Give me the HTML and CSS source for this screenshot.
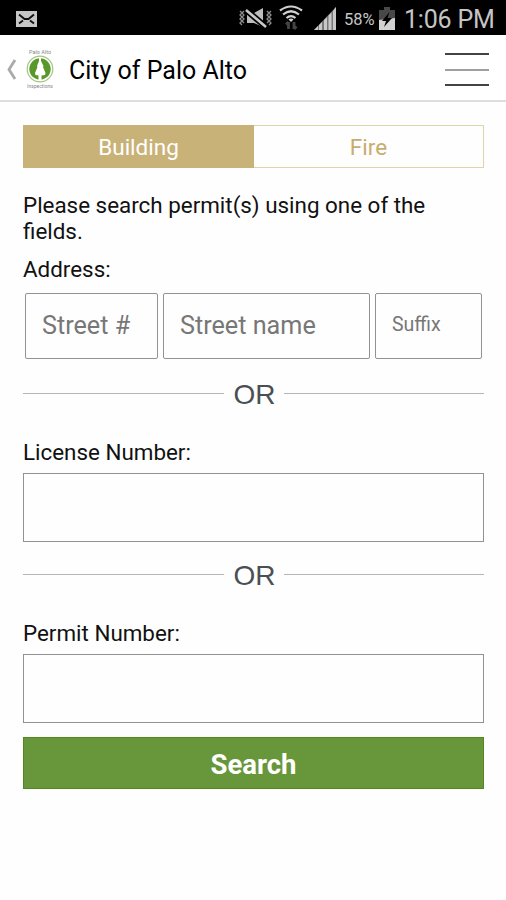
FILE: index.html
```html
<!DOCTYPE html>
<html lang="en">
<head>
<meta charset="utf-8">
<title>City of Palo Alto</title>
<link rel="stylesheet" href="styles.css">
</head>
<body>
<div class="status">
  <svg class="mail" width="21" height="16" viewBox="0 0 21 16"><path fill="#c6c6c6" d="M0 0h21v16H0z"/><path d="M3 3.500l5.500 4.500h4L18 3.500M3 12.500l4-3M18 12.500l-4-3" fill="none" stroke="#111" stroke-width="1.900"/></svg>
  <svg class="mute" width="35" height="22" viewBox="0 0 35 22"><path fill="#bdbdbd" d="M8 5h7l9-5v19l-9-4H8z"/><path d="M7 2L27 19" stroke="#000" stroke-width="6"/><path d="M7 2L27 19" stroke="#c8c8c8" stroke-width="2.600"/><path d="M1 3l2 2-2 2 2 2-2 2 2 2-2 2 2 2M5 3L3 5l2 2-2 2 2 2-2 2 2 2M28 3l2 2-2 2 2 2-2 2 2 2-2 2M32 3l-2 2 2 2-2 2 2 2-2 2 2 2-2 2" fill="none" stroke="#8c8c8c" stroke-width="1.300"/></svg>
  <svg class="wifi" width="24" height="26" viewBox="0 0 24 26"><g fill="none" stroke="#d0d0d0" stroke-width="2.200"><path d="M1 5.500Q12-2.500 23 5.500M4 9.500Q12 3 20 9.500M7.500 13Q12 9.200 16.500 13"/></g><path fill="#d0d0d0" d="M9.500 14.500q2.500-2 5 0L12 17z"/><path d="M9.500 17v7M7 19.500L9.500 17M15 24v-7M15 24l2.500-2.500" stroke="#444" stroke-width="2.800"/></svg>
  <svg class="signal" width="24" height="24" viewBox="0 0 24 24"><path fill="#777" d="M1 23L23 0v23z"/><path fill="#c8c8c8" d="M1 23l4-4v4zM6 18l3-3v8H6zM11 13l3-3v13h-3zM15.500 8.500l3-3V23h-3zM20 4l3-4v23h-3z"/></svg>
  <span class="percent">58%</span>
  <svg class="battery" width="16" height="23" viewBox="0 0 16 23"><path fill="#484848" d="M5 0h6v3h5v20H0V3h5z"/><path fill="#d2d2d2" d="M0 13l16-2v12H0z"/><path fill="#000" d="M10.500 5L3 14h4l-2 6 8-9H8.500z"/></svg>
  <span class="clock">1:06 PM</span>
</div>
<header class="header">
  <svg class="back" width="10" height="22" viewBox="0 0 10 22"><path d="M8 1L2 10.500 8 20" fill="none" stroke="#aaa" stroke-width="2.800"/></svg>
  <div class="logo">
    <span class="logo-top">Palo Alto</span>
    <svg width="28" height="28" viewBox="0 0 28 28"><circle cx="14" cy="14" r="12.800" fill="#fff" stroke="#a3c682" stroke-width="1.200"/><circle cx="14" cy="14" r="10.700" fill="#58982b"/><path fill="#fff" d="M13 2h2v4l2.500 5-.5 1 2.500 6-.5 2-3.500.5V25h-3v-4.500L9.500 20 9 18l2.500-6-.5-1 2-5z"/></svg>
    <span class="logo-bottom">Inspections</span>
  </div>
  <h1 class="title">City of Palo Alto</h1>
  <div class="menu"><i></i><i class="mid"></i><i></i></div>
</header>
<main class="main">
  <div class="tabs"><div class="tab active">Building</div><div class="tab">Fire</div></div>
  <p class="intro">Please search permit(s) using one of the<br>fields.</p>
  <p class="label address">Address:</p>
  <div class="fields"><div class="field"><span>Street #</span></div><div class="field"><span>Street name</span></div><div class="field small"><span>Suffix</span></div></div>
  <div class="or"><span>OR</span></div>
  <p class="label">License Number:</p>
  <div class="box"></div>
  <div class="or second"><span>OR</span></div>
  <p class="label">Permit Number:</p>
  <div class="box"></div>
  <div class="search"><span>Search</span></div>
</main>
</body>
</html>
```

FILE: styles.css
```css
* { box-sizing: border-box; }
body { margin: 0; width: 506px; height: 900px; overflow: hidden; background: #fefefe; color: #111; font-family: Roboto, "Liberation Sans", sans-serif; }
h1, p { margin: 0; font-weight: 400; }
svg { display: block; flex: none; }
.status { height: 35px; background: #000; display: flex; align-items: flex-start; color: #c5c5c5; white-space: nowrap; }
.mail { margin: 11px 0 0 16px; }
.mute { margin: 8px 0 0 202px; }
.wifi { margin: 5px 0 0 5px; }
.signal { margin: 7px 0 0 10px; }
.percent { width: 35px; margin-left: 7px; font-size: 16.500px; line-height: 39px; }
.battery { margin: 7px 0 0 0; }
.clock { margin-left: 9px; font-size: 25px; line-height: 39px; letter-spacing: -.2px; }
.header { height: 67px; border-bottom: 2px solid #dedede; display: flex; align-items: flex-start; background: #fff; }
.back { margin: 24px 0 0 7px; }
.logo { width: 28px; margin: 14px 0 0 9px; display: flex; flex-direction: column; align-items: center; color: #888; font-size: 5.500px; line-height: 6px; white-space: nowrap; }
.logo-bottom { font-size: 5px; }
.title { margin-left: 15px; font-size: 25px; line-height: 72px; color: #000; }
.menu { width: 44px; height: 33px; margin: 18px 17px 0 auto; display: flex; flex-direction: column; justify-content: space-between; }
.menu i { height: 2px; background: #444; }
.menu .mid { background: #a0a0a0; }
.main { padding: 23px 22px 0 23px; }
.tabs { height: 43px; border: 1px solid #e0d3a9; display: flex; font-size: 22.500px; line-height: 43px; text-align: center; color: #c7ad6c; }
.tab { flex: 1; }
.active { flex: none; width: 231px; background: #c9b277; color: #fff; margin: -1px 0 -1px -1px; line-height: 45px; }
.intro { margin-top: 24px; font-size: 22.400px; line-height: 26px; white-space: nowrap; }
.label { height: 26px; font-size: 22.400px; line-height: 26px; }
.address { margin-top: 12px; }
.fields { display: grid; grid-template-columns: 133px 207px 107px; gap: 5px; margin: 11px 0 0 2px; }
.field { height: 66px; border: 1px solid #929292; border-radius: 2px; padding-left: 16px; font-size: 25.200px; line-height: 64px; color: #777; white-space: nowrap; }
.small { font-size: 19.500px; line-height: 62px; }
.or { height: 32px; margin: 20px 0 28px; display: flex; align-items: center; gap: 9px; color: #4b4f54; font: 28px/32px "Liberation Sans", sans-serif; }
.or::before, .or::after { content: ""; flex: 1; height: 1px; background: #b5b5b5; margin-top: -4px; }
.or span { margin: 0 -1px 0 1px; }
.second { margin-top: 18px; }
.box { height: 69px; margin-top: 8px; border: 1px solid #929292; }
.search { height: 52px; margin-top: 14px; background: #68963a; border: 1px solid #55881c; color: #fff; text-align: center; font-size: 27.500px; line-height: 53px; font-weight: 700; }
```
